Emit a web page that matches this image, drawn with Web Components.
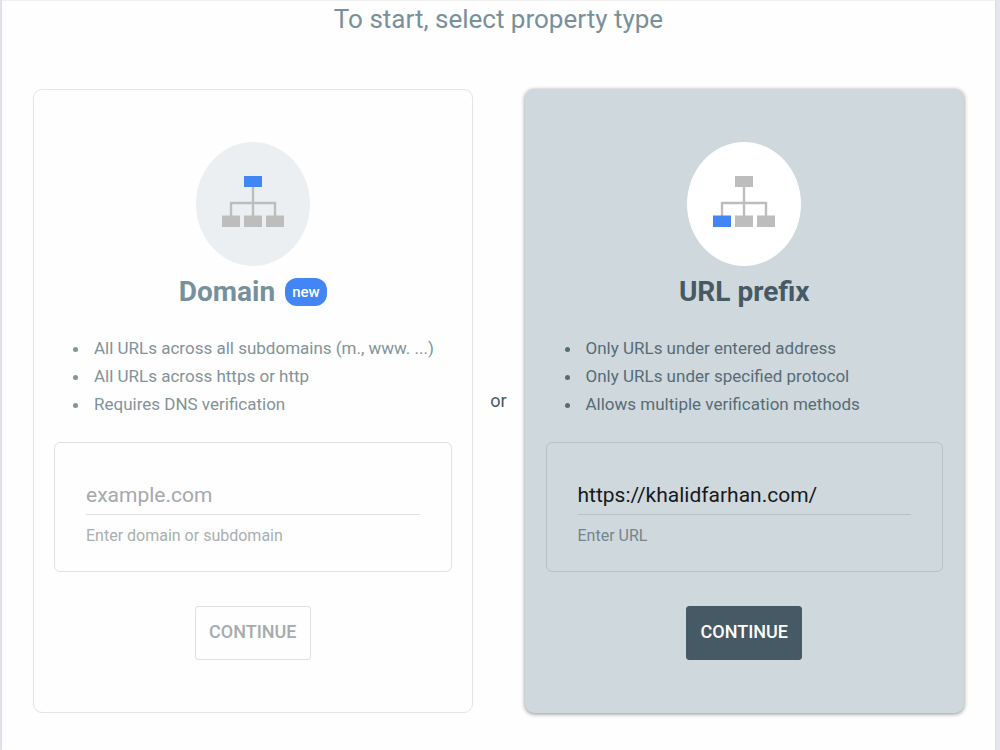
<!DOCTYPE html>
<html lang="en">
<head>
<meta charset="utf-8">
<meta name="viewport" content="width=device-width, initial-scale=1">
<title>Select property type</title>
<style>
  body {
    margin: 0;
    background: #e4e7ec;
    font-family: Roboto, "Liberation Sans", sans-serif;
  }
</style>
</head>
<body>

<property-dialog>
  <span slot="title">To start, select property type</span>

  <property-card slot="first" highlight="root" placeholder="example.com" hint="Enter domain or subdomain">
    <span slot="name">Domain</span>
    <new-badge slot="badge">new</new-badge>
    <li>All URLs across all subdomains (m., www. ...)</li>
    <li>All URLs across https or http</li>
    <li>Requires DNS verification</li>
  </property-card>

  <property-card slot="second" active highlight="leaf" value="https://khalidfarhan.com/" hint="Enter URL">
    <span slot="name">URL prefix</span>
    <li>Only URLs under entered address</li>
    <li>Only URLs under specified protocol</li>
    <li>Allows multiple verification methods</li>
  </property-card>
</property-dialog>

<script>
/**
 * Dialog panel: title on top, two cards with "or" between them
 */
class PropertyDialog extends HTMLElement {
  connectedCallback() {
    this.attachShadow({ mode: 'open' });
    this.shadowRoot.innerHTML = `
      <style>
        :host {
          display: block;
          box-sizing: border-box;
          min-height: 100vh;
          margin: 0 5px 0 2px;
          padding: 0 31px 36px;
          background: #fefefe;
          border-top: 1px solid #f1f1f2;
          box-shadow: 0 0 2px #c3c7cd;
        }
        h1 {
          margin: 0 0 52px;
          font-size: 26px;
          line-height: 36px;
          font-weight: 400;
          text-align: center;
          color: #78909c;
        }
        .choices {
          display: grid;
          grid-template-columns: minmax(0, 1fr) 52px minmax(0, 1fr);
        }
        .or {
          align-self: center;
          text-align: center;
          font-size: 18px;
          line-height: 24px;
          color: #455a64;
        }
      </style>
      <h1><slot name="title"></slot></h1>
      <div class="choices">
        <slot name="first"></slot>
        <span class="or">or</span>
        <slot name="second"></slot>
      </div>
    `;
  }
}

/**
 * Round picture with a small site tree.
 * highlight="root" or "leaf" picks the blue node.
 */
class SiteTree extends HTMLElement {
  connectedCallback() {
    const highlight = this.getAttribute('highlight');
    const root = highlight === 'root' ? '#4285f4' : '#bdbdbd';
    const leaf = highlight === 'leaf' ? '#4285f4' : '#bdbdbd';

    this.attachShadow({ mode: 'open' });
    this.shadowRoot.innerHTML = `
      <style>
        :host {
          display: block;
          width: 114px;
          height: 124px;
          border-radius: 50%;
          background: var(--circle, #eceff1);
        }
        svg {
          display: block;
        }
      </style>
      <svg width="114" height="124" viewBox="0 0 114 124" aria-hidden="true">
        <path d="M57 44v31M35 75V61h44v14" fill="none" stroke="#bdbdbd" stroke-width="2.4"/>
        <rect x="48" y="34" width="18" height="11" fill="${root}"/>
        <rect x="26" y="73.5" width="18" height="11.5" fill="${leaf}"/>
        <rect x="48" y="73.5" width="18" height="11.5" fill="#bdbdbd"/>
        <rect x="70" y="73.5" width="18" height="11.5" fill="#bdbdbd"/>
      </svg>
    `;
  }
}

class NewBadge extends HTMLElement {
  connectedCallback() {
    this.attachShadow({ mode: 'open' });
    this.shadowRoot.innerHTML = `
      <style>
        :host {
          display: block;
          padding: 0 7px;
          border-radius: 12px;
          background: #4285f4;
          color: #fff;
          font-size: 15px;
          line-height: 28px;
          font-weight: 500;
        }
      </style>
      <slot></slot>
    `;
  }
}

/**
 * One property type: picture, name, facts, text field and button
 */
class PropertyCard extends HTMLElement {
  connectedCallback() {
    this.attachShadow({ mode: 'open' });
    this.shadowRoot.innerHTML = `
      <style>
        :host {
          display: flex;
          flex-direction: column;
          align-items: center;
          box-sizing: border-box;
          padding: 52px 20px;
          border: 1px solid #e2e4e6;
          border-radius: 9px;
          color: #829399;
          --line: #dfe1e3;
          --hint: #a9afb2;
        }
        :host([active]) {
          background: #cfd8dd;
          border-color: #cfd8dd;
          box-shadow: 0 1px 4px rgba(0, 0, 0, 0.45);
          color: #566c76;
          --circle: #fff;
          --line: #b7c1c7;
          --hint: #76848b;
        }
        h2 {
          display: flex;
          align-items: center;
          gap: 10px;
          margin: 8px 0 24px;
          font-size: 28px;
          line-height: 36px;
          font-weight: 700;
          color: #78909c;
        }
        :host([active]) h2 {
          color: #455a64;
        }
        ul {
          align-self: stretch;
          margin: 0 0 24px;
          padding-left: 36px;
          font-size: 17px;
          line-height: 28px;
        }
        ::slotted(li) {
          padding-left: 4px;
        }
        .field {
          align-self: stretch;
          display: flex;
          flex-direction: column;
          gap: 9px;
          margin-bottom: 34px;
          padding: 36px 31px 23px;
          border: 1px solid var(--line);
          border-radius: 6px;
        }
        input {
          box-sizing: border-box;
          width: 100%;
          height: 36px;
          padding: 0 0 4px;
          border: 0;
          border-bottom: 1px solid var(--line);
          border-radius: 0;
          outline: 0;
          background: none;
          font: 400 21px Roboto, "Liberation Sans", sans-serif;
          color: #16191b;
        }
        input::placeholder {
          color: #a6a9ab;
          opacity: 1;
        }
        label {
          font-size: 16px;
          line-height: 24px;
          color: var(--hint);
        }
        button {
          box-sizing: border-box;
          min-width: 116px;
          height: 54px;
          padding: 0 12px 3px;
          border: 1px solid #e0e0e0;
          border-radius: 3px;
          background: none;
          font: 500 18px Roboto, "Liberation Sans", sans-serif;
          color: #a8abac;
        }
        :host([active]) button {
          border-color: #455a64;
          background: #455a64;
          color: #fff;
        }
      </style>
      <site-tree highlight="${this.getAttribute('highlight')}"></site-tree>
      <h2><slot name="name"></slot><slot name="badge"></slot></h2>
      <ul><slot></slot></ul>
      <div class="field">
        <input id="address" type="text" spellcheck="false">
        <label for="address"></label>
      </div>
      <button type="button">CONTINUE</button>
    `;

    const input = this.shadowRoot.querySelector('input');
    input.placeholder = this.getAttribute('placeholder') || '';
    input.value = this.getAttribute('value') || '';
    this.shadowRoot.querySelector('label').textContent = this.getAttribute('hint');
  }
}

customElements.define('site-tree', SiteTree);
customElements.define('new-badge', NewBadge);
customElements.define('property-card', PropertyCard);
customElements.define('property-dialog', PropertyDialog);
</script>
</body>
</html>
